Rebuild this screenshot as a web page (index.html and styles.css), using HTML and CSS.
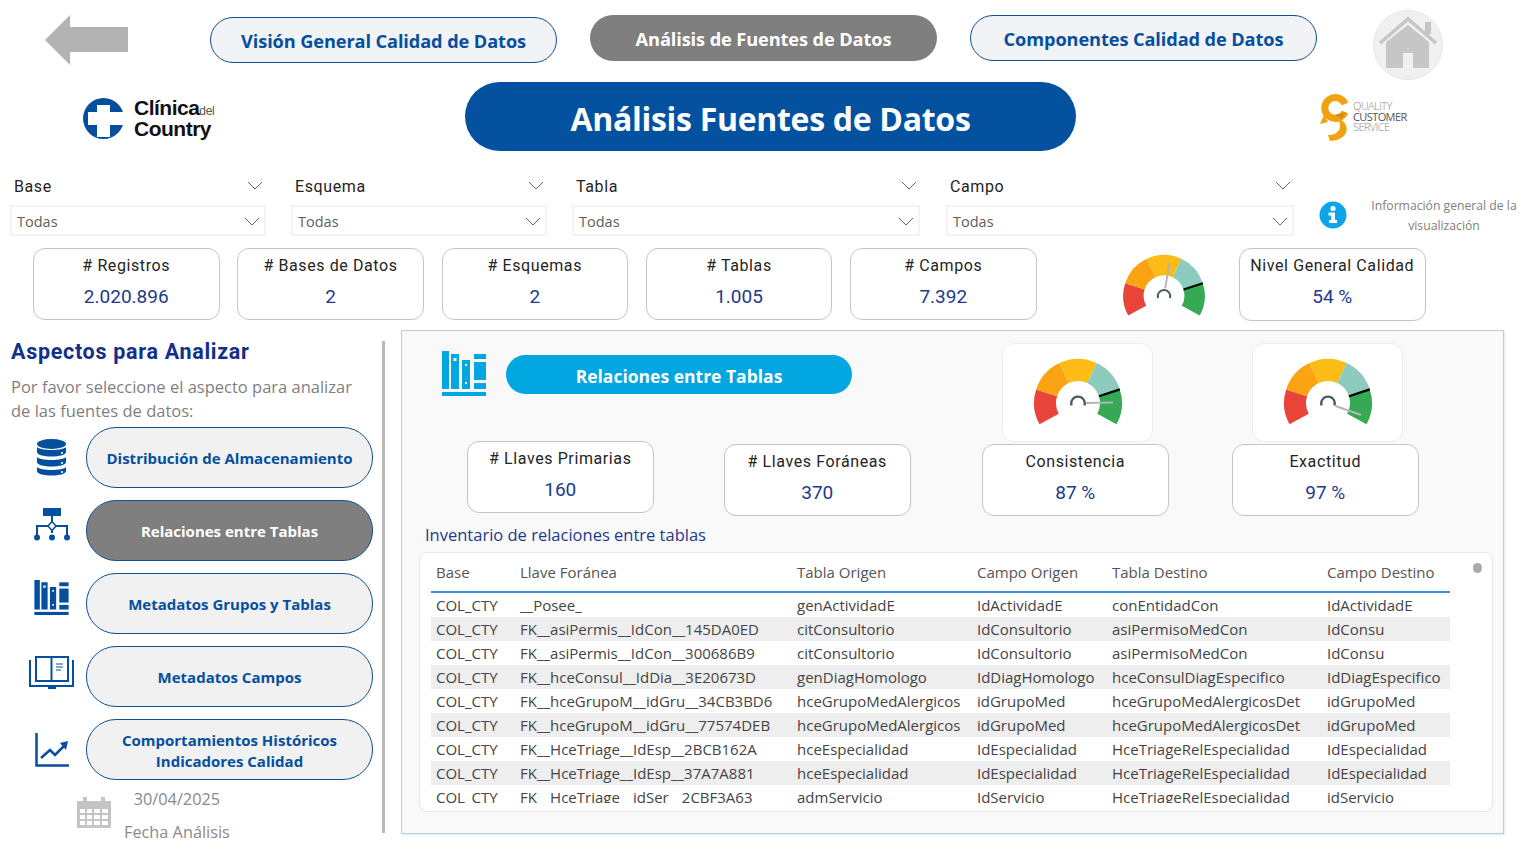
FILE: index.html
```html
<!DOCTYPE html>
<html lang="es">
<head>
  <meta charset="UTF-8">
  <meta name="viewport" content="width=device-width, initial-scale=1.0">
  <title>Análisis Fuentes de Datos</title>
  <link rel="stylesheet" href="styles.css">
</head>
<body>
  <svg class="defs" width="0" height="0" aria-hidden="true">
    <defs>
      <g id="dial">
        <path fill="#e8443a" d="M-38.5 21.3A44 44 0 0 1-41.8-13.6L-20.9-6.8A22 22 0 0 0-19.2 10.7Z"/>
        <path fill="#fba312" d="M-41.8-13.6A44 44 0 0 1-18.6-39.9L-9.3-19.9A22 22 0 0 0-20.9-6.8Z"/>
        <path fill="#fdbb16" d="M-18.6-39.9A44 44 0 0 1 18.6-39.9L9.3-19.9A22 22 0 0 0-9.3-19.9Z"/>
        <path fill="#8ccbbd" d="M18.6-39.9A44 44 0 0 1 41.8-13.6L20.9-6.8A22 22 0 0 0 9.3-19.9Z"/>
        <path fill="#36a955" d="M41.8-13.6A44 44 0 0 1 38.5 21.3L19.2 10.7A22 22 0 0 0 20.9-6.8Z"/>
        <path stroke="#000" stroke-width="2.2" d="M21-6.8L41.8-13.6"/>
      </g>
      <path id="hub" fill="none" stroke="#4b5a63" stroke-width="2.2" d="M-6.5 2.5A6.8 6.8 0 1 1 6.5 2.5"/>
      <g id="books" fill="currentColor">
        <rect x="0" y="0" width="7" height="38"/>
        <path fill-rule="evenodd" d="M9 3h8v35H9zM11.5 7v3h3V7z"/>
        <path fill-rule="evenodd" d="M20 9h8v29h-8zM23 13v2h2v-2zM23 31v2h2v-2z"/>
        <rect x="32" y="3" width="12" height="5"/>
        <rect x="32" y="11" width="12" height="18"/>
        <rect x="32" y="32" width="12" height="6"/>
        <rect x="0" y="41" width="44" height="4"/>
      </g>
      <polyline id="chev" points="1,1 8,8 15,1" fill="none" stroke="#666" stroke-width="1"/>
    </defs>
  </svg>

  <div class="page">
    <div class="top-nav">
      <svg class="back-arrow" viewBox="0 0 83 50" width="83" height="50">
        <path fill="#b3b3b3" d="M0 25L25 0V12H83V37H25V50Z"/>
      </svg>
      <a class="nav-btn nav-first">Visión General Calidad de Datos</a>
      <a class="nav-btn active">Análisis de Fuentes de Datos</a>
      <a class="nav-btn">Componentes Calidad de Datos</a>
      <svg class="home" viewBox="0 0 70 70" width="70" height="70">
        <circle cx="35" cy="35" r="34.5" fill="#f0f0f0" stroke="#e6e6e6"/>
        <rect x="52" y="12" width="6" height="12" fill="#c6c6c6"/>
        <path fill="none" stroke="#c6c6c6" stroke-width="3.5" d="M7 33L35 9L63 33"/>
        <path fill="#c6c6c6" d="M35 15L56 32V58H40V43H30V58H13V32Z"/>
      </svg>
    </div>

    <div class="brand-row">
      <div class="logo-cc">
        <svg viewBox="0 0 41 41" width="41" height="41">
          <circle cx="20.5" cy="20.5" r="20.5" fill="#064f9e"/>
          <path fill="#fff" d="M14 7H27V14H41V27H27V39H14V27H5V14H14Z"/>
        </svg>
        <div class="logo-cc-text">
          <div>Clínica<span class="logo-del">del</span></div>
          <div>Country</div>
        </div>
      </div>
      <h1 class="title">Análisis Fuentes de Datos</h1>
      <div class="logo-qcs">
        <svg viewBox="0 0 30 48" width="30" height="48">
          <path fill="none" stroke="#f0a30f" stroke-width="7" d="M25 11A10.500 10.500 0 1 0 25 19"/>
          <path fill="#f0a30f" d="M4 22L8 29L0 31Z"/>
          <path fill="#f0a30f" d="M17 25C31 29 31 47 10 48L8 42C18 43 24 34 17 25Z"/>
          <path fill="#d98f0b" d="M14 22L26 19L22 26Z"/>
        </svg>
        <div class="logo-qcs-text">
          <span>QUALITY</span>
          <span class="dark">CUSTOMER</span>
          <span>SERVICE</span>
        </div>
      </div>
    </div>

    <div class="filters">
      <div class="filter f-short">
        <div class="filter-head"><span>Base</span><svg class="chev" width="16" height="9"><use href="#chev"/></svg></div>
        <div class="filter-box"><span>Todas</span><svg width="16" height="9"><use href="#chev"/></svg></div>
      </div>
      <div class="filter f-short">
        <div class="filter-head"><span>Esquema</span><svg class="chev" width="16" height="9"><use href="#chev"/></svg></div>
        <div class="filter-box"><span>Todas</span><svg width="16" height="9"><use href="#chev"/></svg></div>
      </div>
      <div class="filter f-long">
        <div class="filter-head"><span>Tabla</span><svg class="chev" width="16" height="9"><use href="#chev"/></svg></div>
        <div class="filter-box"><span>Todas</span><svg width="16" height="9"><use href="#chev"/></svg></div>
      </div>
      <div class="filter f-long f-last">
        <div class="filter-head"><span>Campo</span><svg class="chev" width="16" height="9"><use href="#chev"/></svg></div>
        <div class="filter-box"><span>Todas</span><svg width="16" height="9"><use href="#chev"/></svg></div>
      </div>
      <svg class="info-icon" viewBox="0 0 28 28" width="28" height="28">
        <circle cx="14" cy="14" r="13.500" fill="#0ba5ec"/>
        <circle cx="14" cy="7.500" r="2.600" fill="#fff"/>
        <path fill="#fff" d="M9.500 11.500H16V19H18V22H10V19H12V14.500H9.500Z"/>
      </svg>
      <p class="info-text">Información general de la visualización</p>
    </div>

    <div class="kpi-row">
      <div class="kpi"><div class="kpi-label"># Registros</div><div class="kpi-value">2.020.896</div></div>
      <div class="kpi"><div class="kpi-label"># Bases de Datos</div><div class="kpi-value">2</div></div>
      <div class="kpi"><div class="kpi-label"># Esquemas</div><div class="kpi-value">2</div></div>
      <div class="kpi"><div class="kpi-label"># Tablas</div><div class="kpi-value">1.005</div></div>
      <div class="kpi"><div class="kpi-label"># Campos</div><div class="kpi-value">7.392</div></div>
      <svg class="gauge gauge-top" viewBox="-45 -45 90 70" width="84" height="65">
        <use href="#dial"/>
        <line x1="1.300" y1="-8" x2="5.800" y2="-35" stroke="#b5b5b5" stroke-width="2"/>
        <use href="#hub"/>
      </svg>
      <div class="kpi kpi-total"><div class="kpi-label">Nivel General Calidad</div><div class="kpi-value">54 %</div></div>
    </div>

    <div class="main">
      <aside class="side">
        <h2>Aspectos para Analizar</h2>
        <p class="side-intro">Por favor seleccione el aspecto para analizar de las fuentes de datos:</p>

        <div class="aspect">
          <div class="aspect-icon">
            <svg viewBox="0 0 29 37" width="29" height="37">
              <g fill="#064f9e">
                <ellipse cx="14.500" cy="5" rx="14.500" ry="5"/>
                <path d="M0 8C3 12 26 12 29 8V13C29 19 0 19 0 13Z"/>
                <path d="M0 18C3 22 26 22 29 18V23C29 29 0 29 0 23Z"/>
                <path d="M0 28C3 32 26 32 29 28V32C29 38 0 38 0 32Z"/>
              </g>
              <g fill="#fff">
                <circle cx="25" cy="14" r="1"/>
                <circle cx="25" cy="24" r="1"/>
                <circle cx="25" cy="33" r="1"/>
              </g>
            </svg>
          </div>
          <a class="aspect-btn">Distribución de Almacenamiento</a>
        </div>

        <div class="aspect">
          <div class="aspect-icon up-12">
            <svg viewBox="0 0 38 33" width="38" height="33">
              <rect x="10" y="0" width="18" height="8" fill="#064f9e"/>
              <path fill="none" stroke="#064f9e" stroke-width="2" d="M19 8V25M4 28V18H34V28"/>
              <path d="M19 13.500L23 18L19 22.500L15 18Z" fill="#fff" stroke="#064f9e" stroke-width="1.500"/>
              <g fill="#064f9e">
                <circle cx="4" cy="29.500" r="3"/>
                <circle cx="19" cy="29.500" r="3"/>
                <circle cx="34" cy="29.500" r="3"/>
              </g>
            </svg>
          </div>
          <a class="aspect-btn active">Relaciones entre Tablas</a>
        </div>

        <div class="aspect">
          <div class="aspect-icon up-12">
            <svg class="icon-navy" viewBox="0 0 44 45" width="35" height="35"><use href="#books"/></svg>
          </div>
          <a class="aspect-btn">Metadatos Grupos y Tablas</a>
        </div>

        <div class="aspect">
          <div class="aspect-icon up-8">
            <svg viewBox="0 0 45 33" width="45" height="33">
              <g fill="none" stroke="#064f9e">
                <path stroke-width="2" d="M1 4V30H44V4"/>
                <rect x="7" y="1" width="32" height="24" stroke-width="2"/>
                <path stroke-width="2" d="M22.500 1V25"/>
                <path stroke-width="1" d="M27 8H34M27 11H34M27 14H32"/>
              </g>
              <rect x="19" y="30" width="8" height="3" fill="#064f9e"/>
            </svg>
          </div>
          <a class="aspect-btn">Metadatos Campos</a>
        </div>

        <div class="aspect">
          <div class="aspect-icon">
            <svg viewBox="0 0 34 34" width="34" height="34">
              <path fill="none" stroke="#064f9e" stroke-width="2.500" d="M1.500 0V32.500H34"/>
              <path fill="none" stroke="#064f9e" stroke-width="2.500" d="M6 25L15 17L20 22L29 13"/>
              <path fill="#064f9e" d="M25 10L33 8L31 17Z"/>
            </svg>
          </div>
          <a class="aspect-btn">Comportamientos Históricos<br>Indicadores Calidad</a>
        </div>

        <div class="date-row">
          <svg viewBox="0 0 34 31" width="34" height="31">
            <path fill-rule="evenodd" fill="#c4c4c4" d="M0 4H6V0H10V4H24V0H28V4H34V31H0ZM3 12V16H8V12ZM10 12V16H15V12ZM17 12V16H23V12ZM25 12V16H31V12ZM3 18V22H8V18ZM10 18V22H15V18ZM17 18V22H23V18ZM25 18V22H31V18ZM3 24V28H8V24ZM10 24V28H15V24ZM17 24V28H23V24ZM25 24V28H31V24Z"/>
          </svg>
          <div class="date-text">
            <div class="date-value">30/04/2025</div>
            <div class="date-label">Fecha Análisis</div>
          </div>
        </div>
      </aside>

      <section class="panel">
        <div class="panel-top">
          <div class="rel-col">
            <div class="rel-head">
              <svg class="icon-cyan" viewBox="0 0 44 45" width="46" height="45"><use href="#books"/></svg>
              <div class="pill">Relaciones entre Tablas</div>
            </div>
            <div class="rel-cards">
              <div class="kpi"><div class="kpi-label"># Llaves Primarias</div><div class="kpi-value">160</div></div>
              <div class="kpi kpi-down"><div class="kpi-label"># Llaves Foráneas</div><div class="kpi-value">370</div></div>
            </div>
          </div>
          <div class="gauge-col">
            <div class="gauge-card">
              <svg class="gauge" viewBox="-45 -45 90 70" width="90" height="70">
                <use href="#dial"/>
                <line x1="8" y1="0" x2="35" y2="-0.500" stroke="#b5b5b5" stroke-width="2"/>
                <use href="#hub"/>
              </svg>
            </div>
            <div class="kpi"><div class="kpi-label">Consistencia</div><div class="kpi-value">87 %</div></div>
          </div>
          <div class="gauge-col">
            <div class="gauge-card">
              <svg class="gauge" viewBox="-45 -45 90 70" width="90" height="70">
                <use href="#dial"/>
                <line x1="7.500" y1="3" x2="33" y2="12" stroke="#b5b5b5" stroke-width="2"/>
                <use href="#hub"/>
              </svg>
            </div>
            <div class="kpi"><div class="kpi-label">Exactitud</div><div class="kpi-value">97 %</div></div>
          </div>
        </div>

        <h3 class="table-title">Inventario de relaciones entre tablas</h3>

        <div class="table-card">
          <span class="scroll-thumb"></span>
          <div class="table-clip">
            <table>
              <thead>
                <tr><th>Base</th><th>Llave Foránea</th><th>Tabla Origen</th><th>Campo Origen</th><th>Tabla Destino</th><th>Campo Destino</th></tr>
              </thead>
              <tbody>
                <tr><td>COL_CTY</td><td>__Posee_</td><td>genActividadE</td><td>IdActividadE</td><td>conEntidadCon</td><td>IdActividadE</td></tr>
                <tr><td>COL_CTY</td><td>FK__asiPermis__IdCon__145DA0ED</td><td>citConsultorio</td><td>IdConsultorio</td><td>asiPermisoMedCon</td><td>IdConsu</td></tr>
                <tr><td>COL_CTY</td><td>FK__asiPermis__IdCon__300686B9</td><td>citConsultorio</td><td>IdConsultorio</td><td>asiPermisoMedCon</td><td>IdConsu</td></tr>
                <tr><td>COL_CTY</td><td>FK__hceConsul__IdDia__3E20673D</td><td>genDiagHomologo</td><td>IdDiagHomologo</td><td>hceConsulDiagEspecifico</td><td>IdDiagEspecifico</td></tr>
                <tr><td>COL_CTY</td><td>FK__hceGrupoM__idGru__34CB3BD6</td><td>hceGrupoMedAlergicos</td><td>idGrupoMed</td><td>hceGrupoMedAlergicosDet</td><td>idGrupoMed</td></tr>
                <tr><td>COL_CTY</td><td>FK__hceGrupoM__idGru__77574DEB</td><td>hceGrupoMedAlergicos</td><td>idGrupoMed</td><td>hceGrupoMedAlergicosDet</td><td>idGrupoMed</td></tr>
                <tr><td>COL_CTY</td><td>FK__HceTriage__IdEsp__2BCB162A</td><td>hceEspecialidad</td><td>IdEspecialidad</td><td>HceTriageRelEspecialidad</td><td>IdEspecialidad</td></tr>
                <tr><td>COL_CTY</td><td>FK__HceTriage__IdEsp__37A7A881</td><td>hceEspecialidad</td><td>IdEspecialidad</td><td>HceTriageRelEspecialidad</td><td>IdEspecialidad</td></tr>
                <tr><td>COL_CTY</td><td>FK__HceTriage__idSer__2CBF3A63</td><td>admServicio</td><td>IdServicio</td><td>HceTriageRelEspecialidad</td><td>idServicio</td></tr>
              </tbody>
            </table>
          </div>
        </div>
      </section>
    </div>
  </div>
</body>
</html>
```

FILE: styles.css
```css
:root {
  --navy: #064f9e;
  --cyan: #02a6e1;
  --gray-active: #7f7f7f;
  --kpi-blue: #1c3a8e;
}

* {
  box-sizing: border-box;
}

body {
  margin: 0;
  background-color: white;
  font-family: 'Open Sans', sans-serif;
  color: #333;
}

.defs {
  position: absolute;
}

.page {
  width: 1526px;
  height: 855px;
  overflow: hidden;
}

/* top navigation */
.top-nav {
  display: flex;
  align-items: flex-start;
  height: 82px;
  padding-left: 45px;
}

.back-arrow {
  margin-top: 15px;
}

.nav-btn {
  display: flex;
  align-items: center;
  justify-content: center;
  width: 347px;
  height: 46px;
  margin-top: 15px;
  margin-left: 33px;
  padding-top: 2px;
  background-color: #f1f3f6;
  border: 1.5px solid #0f4f92;
  border-radius: 23px;
  color: var(--navy);
  font-size: 18.2px;
  font-weight: 700;
  letter-spacing: -0.1px;
}

.nav-first {
  margin-top: 17px;
  margin-left: 82px;
}

.nav-btn.active {
  background-color: var(--gray-active);
  border: none;
  color: white;
}

.home {
  margin-top: 10px;
  margin-left: 56px;
}

/* brand row */
.brand-row {
  display: flex;
  height: 69px;
}

.logo-cc {
  display: flex;
  align-items: center;
  width: 382px;
  margin-left: 83px;
  margin-top: 15px;
  height: 42px;
}

.logo-cc-text {
  margin-left: 10px;
  font-family: 'Liberation Sans', sans-serif;
  font-weight: 700;
  font-size: 21px;
  line-height: 18px;
  letter-spacing: -0.5px;
  color: #111;
}

.logo-del {
  font-size: 12px;
  font-weight: 400;
  letter-spacing: -0.3px;
  color: #555;
}

.title {
  display: flex;
  align-items: center;
  justify-content: center;
  width: 611px;
  height: 69px;
  margin: 0;
  padding-top: 3px;
  background-color: #03519f;
  border-radius: 35px;
  color: white;
  font-size: 32px;
  font-weight: 700;
  letter-spacing: -0.3px;
}

.logo-qcs {
  display: flex;
  margin-left: 244px;
  margin-top: 11px;
}

.logo-qcs-text {
  display: flex;
  flex-direction: column;
  margin-left: 3px;
  padding-top: 8px;
  font-size: 11px;
  font-weight: 300;
  line-height: 10.5px;
  letter-spacing: -0.6px;
  color: #8d8d8d;
}

.logo-qcs-text .dark {
  color: #555;
  font-weight: 400;
}

/* slicers */
.filters {
  display: flex;
  height: 64px;
  margin-top: 21px;
  padding-left: 10px;
  gap: 25px;
}

.f-short {
  width: 256px;
}

.f-long {
  width: 348px;
}

.f-last {
  margin-left: 1px;
}

.filter-head {
  display: flex;
  align-items: center;
  justify-content: space-between;
  height: 29px;
  margin-bottom: 4px;
  padding: 0 3px 0 4px;
  font-family: Roboto, sans-serif;
  font-size: 16px;
  letter-spacing: 0.6px;
  color: #252423;
}

.filter-head .chev {
  margin-bottom: 2px;
}

.filter-box {
  display: flex;
  align-items: center;
  justify-content: space-between;
  height: 31px;
  padding: 1px 4px 0 5px;
  border: 2px solid #f3f3f3;
  font-size: 14.5px;
  color: #605e5c;
}

.info-icon {
  margin-top: 29px;
}

.info-text {
  width: 150px;
  margin: 24px 0 0 -3px;
  font-size: 12.2px;
  line-height: 20px;
  text-align: center;
  color: #808080;
}

/* kpi cards */
.kpi-row {
  display: flex;
  align-items: flex-start;
  margin-top: 12px;
  padding-left: 33px;
  gap: 17.75px;
}

.kpi {
  width: 186.5px;
  height: 72px;
  padding-top: 7px;
  background-color: white;
  border: 1px solid #c4c4c4;
  border-radius: 12px;
  text-align: center;
  font-family: Roboto, sans-serif;
}

.kpi-label {
  height: 20px;
  font-size: 16px;
  line-height: 20px;
  letter-spacing: 0.6px;
  color: #252423;
}

.kpi-value {
  margin-top: 9px;
  font-size: 19px;
  line-height: 24px;
  color: var(--kpi-blue);
}

.gauge-top {
  margin: 6px 0 0 68px;
}

.kpi-total {
  height: 73px;
  margin-left: 15px;
}

/* main area */
.main {
  display: flex;
  margin-top: 9px;
}

.side {
  width: 385px;
  height: 492px;
  margin-top: 11px;
  margin-right: 16px;
  padding-left: 11px;
  border-right: 3px solid #b8b8b8;
}

.side h2 {
  margin: 0;
  font-family: Roboto, sans-serif;
  font-size: 21.5px;
  line-height: 22px;
  font-weight: 700;
  letter-spacing: 0.7px;
  color: #12308a;
}

.side-intro {
  width: 350px;
  margin: 12px 0 0 0;
  font-size: 16.5px;
  line-height: 24px;
  font-weight: 400;
  color: #7f7f7f;
}

.aspect {
  display: flex;
  align-items: center;
  height: 61px;
  margin-bottom: 12px;
}

.side-intro + .aspect {
  margin-top: 4px;
}

.aspect-icon {
  display: flex;
  justify-content: center;
  width: 45px;
  margin-left: 18px;
  margin-right: 12px;
}

.up-12 {
  margin-bottom: 12px;
}

.up-8 {
  margin-bottom: 8px;
}

.aspect-btn {
  display: flex;
  align-items: center;
  justify-content: center;
  width: 287px;
  height: 61px;
  padding-top: 2px;
  background-color: #f1f1f1;
  border: 1.5px solid #0f4f92;
  border-radius: 30px;
  color: var(--navy);
  font-size: 15px;
  line-height: 21px;
  font-weight: 700;
  text-align: center;
}

.aspect-btn.active {
  background-color: var(--gray-active);
  color: white;
}

.icon-navy {
  color: var(--navy);
}

.icon-cyan {
  color: var(--cyan);
}

.date-row {
  display: flex;
  margin-top: -3px;
  padding-left: 66px;
  color: #8a8a8a;
}

.date-row svg {
  margin-top: 8px;
}

.date-text {
  margin-left: 13px;
  text-align: center;
}

.date-value {
  font-size: 16.3px;
  line-height: 20px;
}

.date-label {
  margin-top: 13px;
  font-size: 16.3px;
  line-height: 20px;
}

/* right panel */
.panel {
  width: 1103px;
  height: 504px;
  background-color: #f9f9f9;
  border: 1px solid #b5cfe6;
  box-shadow: 1px 1px 2px rgba(0, 0, 0, 0.1);
}

.panel-top {
  display: flex;
  height: 186px;
}

.rel-col {
  width: 580px;
  padding-left: 39px;
}

.rel-head {
  display: flex;
  margin-top: 20px;
  gap: 19px;
}

.pill {
  display: flex;
  align-items: center;
  justify-content: center;
  width: 346px;
  height: 39px;
  margin-top: 4px;
  padding-top: 2px;
  background-color: var(--cyan);
  border-radius: 20px;
  color: white;
  font-size: 17.5px;
  font-weight: 700;
}

.rel-cards {
  display: flex;
  margin-top: 45px;
  margin-left: 26px;
  gap: 70.5px;
}

.kpi-down {
  margin-top: 3px;
}

.gauge-col {
  width: 187px;
  margin-right: 63px;
}

.gauge-card {
  display: flex;
  align-items: center;
  justify-content: center;
  width: 151px;
  height: 99px;
  margin: 12px 0 2px 20px;
  background-color: white;
  border: 1px solid #eeeeee;
  border-radius: 12px;
}

.table-title {
  height: 22px;
  margin: 7px 0 6px 23px;
  font-size: 16.5px;
  line-height: 22px;
  font-weight: 400;
  color: #1c3a8e;
}

.table-card {
  position: relative;
  width: 1074px;
  height: 260px;
  margin-left: 17px;
  background-color: white;
  border: 1px solid #e6e6e6;
  border-radius: 8px;
}

.scroll-thumb {
  position: absolute;
  top: 10px;
  left: 1053px;
  width: 9px;
  height: 10px;
  background-color: #aaaaaa;
  border-radius: 5px;
}

.table-clip {
  width: 1020px;
  height: 250px;
  margin-left: 11px;
  overflow: hidden;
}

table {
  width: 1019px;
  table-layout: fixed;
  border-collapse: separate;
  border-spacing: 0;
  font-size: 15px;
}

th:nth-child(1) { width: 84px; }
th:nth-child(2) { width: 277px; }
th:nth-child(3) { width: 180px; }
th:nth-child(4) { width: 135px; }
th:nth-child(5) { width: 215px; }
th:nth-child(6) { width: 128px; }

th {
  height: 40px;
  padding: 0 0 0 5px;
  border-bottom: 2px solid #3a8fd5;
  text-align: left;
  font-weight: 400;
  color: #555;
}

td {
  height: 24px;
  padding: 0 0 0 5px;
  white-space: nowrap;
  overflow: hidden;
  color: #444;
}

tbody tr:nth-child(even) {
  background-color: #efeeee;
}
```
